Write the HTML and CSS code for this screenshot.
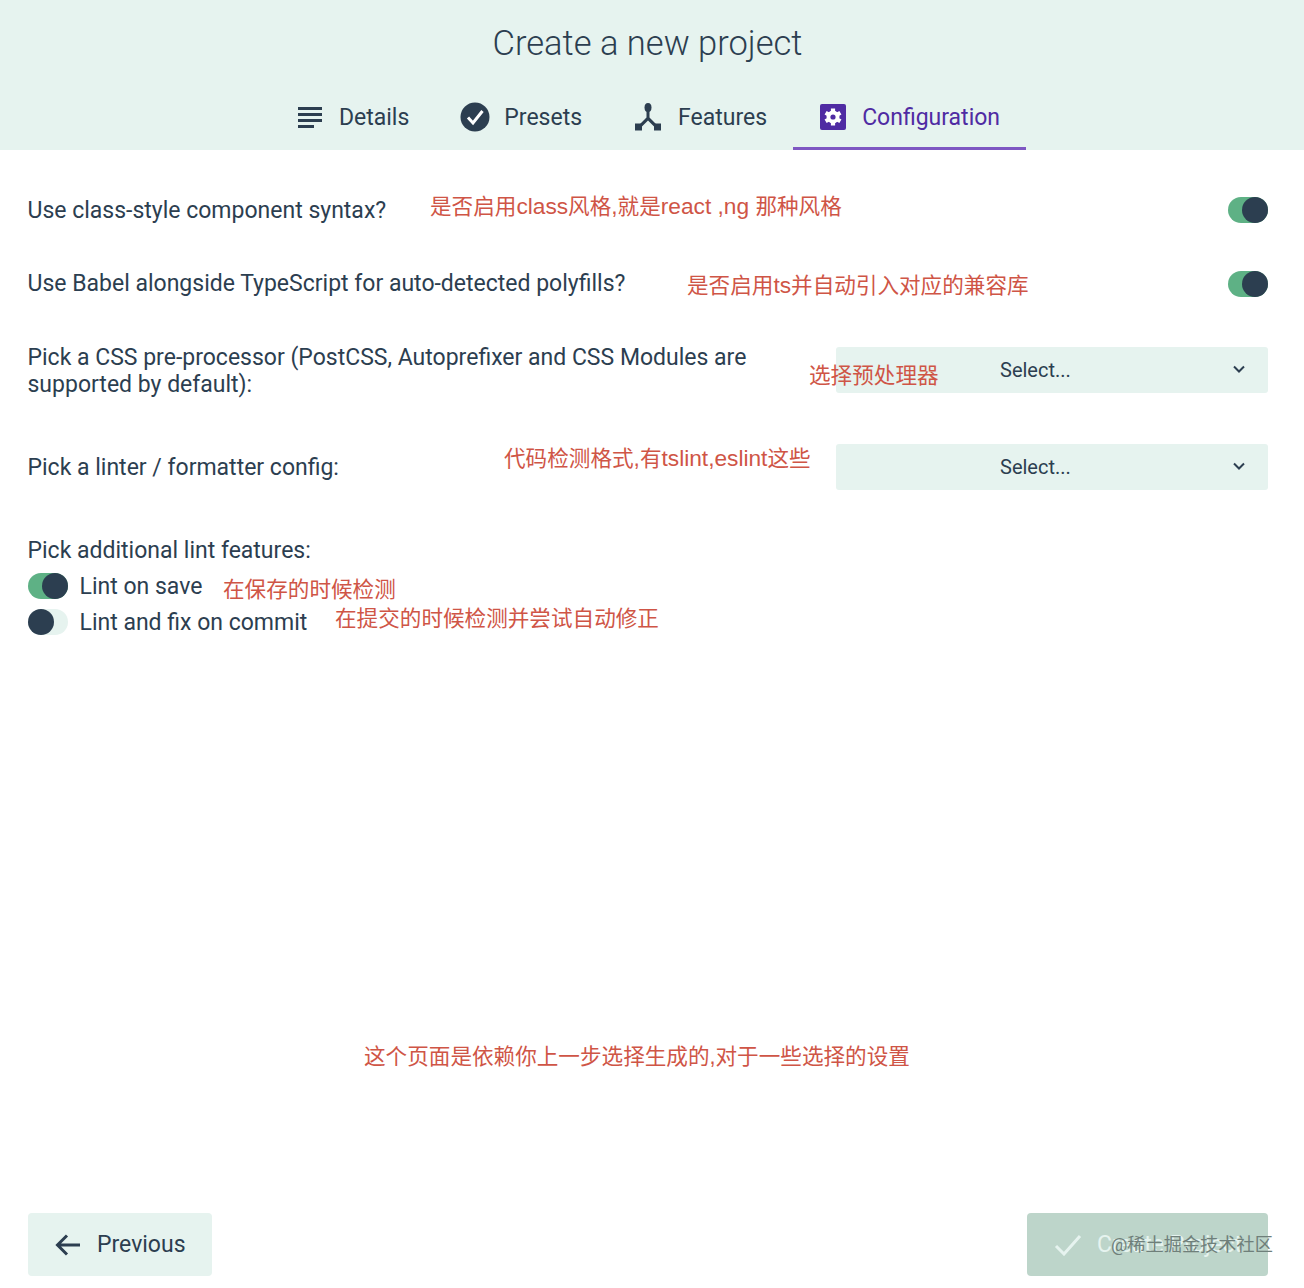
FILE: index.html
```html
<!DOCTYPE html>
<html lang="zh-CN">
<head>
    <meta charset="UTF-8">
    <title>Create a new project</title>
    <link rel="stylesheet" href="styles.css">
</head>
<body>
<div class="page">
    <div class="header-bar">
        <h1>Create a new project</h1>
        <div class="tabs">
            <div class="tab tab-details">
                <svg class="tab-icon" width="26" height="26" viewBox="0 0 26 26"><path d="M1 3h24v3H1zM1 9h24v3H1zM1 15h24v3H1zM1 21h16v3H1z" fill="#2c3e50"/></svg>
                <span>Details</span>
            </div>
            <div class="tab tab-presets">
                <svg class="tab-icon" width="30" height="30" viewBox="0 0 30 30"><circle cx="15" cy="15" r="14.5" fill="#2c3e50"/><path d="M8 15.5l5 5.5 9.5-12" fill="none" stroke="#fff" stroke-width="3"/></svg>
                <span>Presets</span>
            </div>
            <div class="tab tab-features">
                <svg class="tab-icon" width="28" height="28" viewBox="0 0 28 28"><ellipse cx="14" cy="4.5" rx="3.5" ry="4.5" fill="#2c3e50"/><path d="M12.5 8h3v6.5l7.500 7.500-2.200 2.200L14 17.400l-6.800 6.800L5 22l7.500-7.500z" fill="#2c3e50"/><path d="M1 20.5h7v7H1zM20 20.5h7v7h-7z" fill="#2c3e50"/></svg>
                <span>Features</span>
            </div>
            <div class="tab tab-config active">
                <svg class="tab-icon" width="26" height="26" viewBox="0 0 26 26"><rect width="26" height="26" rx="2" fill="#4f2ba3"/><path d="M13 4.5v17M5.6 8.75l14.8 8.5M5.6 17.25l14.8-8.5" stroke="#fff" stroke-width="4.2"/><circle cx="13" cy="13" r="6.5" fill="#fff"/><circle cx="13" cy="13" r="2.6" fill="#4f2ba3"/></svg>
                <span>Configuration</span>
            </div>
        </div>
    </div>

    <div class="content">
        <div class="prompt prompt-first">
            <div class="prompt-label">Use class-style component syntax?</div>
            <div class="toggle on"></div>
        </div>
        <div class="prompt prompt-second">
            <div class="prompt-label">Use Babel alongside TypeScript for auto-detected polyfills?</div>
            <div class="toggle on"></div>
        </div>
        <div class="prompt prompt-third">
            <div class="prompt-label prompt-wrap">Pick a CSS pre-processor (PostCSS, Autoprefixer and CSS Modules are supported by default):</div>
            <div class="select-box">
                <span>Select...</span>
                <svg class="select-arrow" width="14" height="9" viewBox="0 0 14 9"><path d="M2 1.5l5 5 5-5" fill="none" stroke="#2c3e50" stroke-width="2"/></svg>
            </div>
        </div>
        <div class="prompt prompt-fourth">
            <div class="prompt-label">Pick a linter / formatter config:</div>
            <div class="select-box">
                <span>Select...</span>
                <svg class="select-arrow" width="14" height="9" viewBox="0 0 14 9"><path d="M2 1.5l5 5 5-5" fill="none" stroke="#2c3e50" stroke-width="2"/></svg>
            </div>
        </div>
        <div class="prompt-group">
            <div class="prompt-label">Pick additional lint features:</div>
            <div class="check-row">
                <div class="toggle on"></div>
                <span>Lint on save</span>
            </div>
            <div class="check-row">
                <div class="toggle"></div>
                <span>Lint and fix on commit</span>
            </div>
        </div>
    </div>

    <div class="footer-bar">
        <div class="btn btn-prev">
            <svg width="26" height="24" viewBox="0 0 26 24"><path d="M25 12H3M12 2.5L2.5 12l9.5 9.5" fill="none" stroke="#2c3e50" stroke-width="3"/></svg>
            <span>Previous</span>
        </div>
        <div class="btn btn-create">
            <svg width="28" height="22" viewBox="0 0 28 22"><path d="M2 12l8 8L26 2" fill="none" stroke="#e6f3ef" stroke-width="3"/></svg>
            <span>Create Project</span>
        </div>
    </div>

    <!-- red notes written over the screenshot -->
    <div class="note note-1">是否启用<span class="latin">class</span>风格<span class="latin">,</span>就是<span class="latin">react ,ng </span>那种风格</div>
    <div class="note note-2">是否启用<span class="latin">ts</span>并自动引入对应的兼容库</div>
    <div class="note note-3">选择预处理器</div>
    <div class="note note-4">代码检测格式<span class="latin">,</span>有<span class="latin">tslint,eslint</span>这些</div>
    <div class="note note-5">在保存的时候检测</div>
    <div class="note note-6">在提交的时候检测并尝试自动修正</div>
    <div class="note note-7">这个页面是依赖你上一步选择生成的,对于一些选择的设置</div>
    <div class="watermark">@稀土掘金技术社区</div>
</div>
</body>
</html>
```

FILE: styles.css
```css
body, html {
    margin: 0;
    padding: 0;
    background: #fff;
    color: #2c3e50;
    font-family: Roboto, "Noto Sans CJK SC", sans-serif;
}

.page {
    position: relative;
    height: 1288px;
    display: flex;
    flex-direction: column;
    overflow: hidden;
}

.header-bar {
    height: 150px;
    box-sizing: border-box;
    background: #e6f3ef;
    padding-top: 20px;
}

.header-bar h1 {
    margin: 0;
    padding-right: 9px;
    text-align: center;
    font-size: 34.5px;
    line-height: 46px;
    font-weight: 300;
}

.tabs {
    display: flex;
    justify-content: center;
    margin-top: 18px;
    padding-right: 7px;
}

.tab {
    height: 66px;
    box-sizing: border-box;
    padding: 3px 26px 0;
    display: flex;
    align-items: center;
    font-size: 23px;
    border-bottom: 3px solid transparent;
}

.tab-icon {
    margin-right: 16px;
}

.tab-details {
    padding-right: 25px;
}

.tab-presets .tab-icon {
    margin-right: 14px;
}

.tab-config {
    padding-left: 27px;
}

.tab.active {
    color: #4f2ba3;
    border-bottom-color: #7e57c2;
}

.content {
    padding: 23px 36px 0 27.5px;
}

.prompt {
    display: flex;
    align-items: center;
    justify-content: space-between;
    font-size: 23px;
    line-height: 27px;
}

.prompt-first {
    height: 74px;
}

.prompt-second {
    height: 73px;
}

.prompt-third {
    height: 100px;
}

.prompt-fourth {
    height: 94px;
}

.prompt-wrap {
    width: 760px;
    padding-top: 2px;
}

.toggle {
    position: relative;
    width: 40px;
    height: 26px;
    border-radius: 13px;
    background: #e6f3ef;
    flex-shrink: 0;
}

.toggle:after {
    content: "";
    position: absolute;
    left: 0;
    top: 0;
    width: 26px;
    height: 26px;
    border-radius: 50%;
    background: #2c3e50;
}

.toggle.on {
    background: #5eb185;
}

.toggle.on:after {
    left: 14px;
}

.select-box {
    position: relative;
    width: 432px;
    height: 46px;
    box-sizing: border-box;
    padding-left: 164px;
    display: flex;
    align-items: center;
    background: #e6f3ef;
    border-radius: 3px;
    font-size: 20px;
}

.select-arrow {
    position: absolute;
    right: 22px;
    top: 18px;
}

.prompt-group {
    margin-top: 23px;
    font-size: 23px;
    line-height: 27px;
}

.check-row {
    display: flex;
    align-items: center;
    height: 36px;
}

.prompt-group .prompt-label {
    margin-bottom: 4px;
}

.check-row .toggle {
    margin-right: 12px;
}

.footer-bar {
    margin-top: auto;
    padding: 0 36px 12px 28px;
    display: flex;
    justify-content: space-between;
}

.btn {
    height: 63px;
    display: flex;
    align-items: center;
    border-radius: 4px;
    font-size: 23px;
    box-sizing: border-box;
}

.btn-prev {
    width: 184px;
    padding-left: 27px;
    gap: 16px;
    background: #e6f3ef;
}

.btn-create {
    width: 241px;
    padding-left: 27px;
    gap: 15px;
    background: #bdd5ca;
    color: #e6f3ef;
    white-space: nowrap;
    overflow: hidden;
}

.note {
    position: absolute;
    color: #cf5546;
    font-family: "Liberation Sans", "Noto Sans CJK SC", sans-serif;
    font-size: 21.6px;
    line-height: 28px;
    white-space: nowrap;
}

.latin {
    font-size: 22.7px;
}

.note-1 { left: 430px; top: 192px; }
.note-2 { left: 687px; top: 271px; }
.note-3 { left: 809px; top: 362px; }
.note-4 { left: 504px; top: 444px; }
.note-5 { left: 223px; top: 576px; }
.note-6 { left: 335px; top: 605px; }
.note-7 { left: 364px; top: 1043px; }

.watermark {
    position: absolute;
    left: 1111px;
    top: 1231px;
    color: #6f7f7a;
    font-size: 18.2px;
    line-height: 28px;
    white-space: nowrap;
}
```
